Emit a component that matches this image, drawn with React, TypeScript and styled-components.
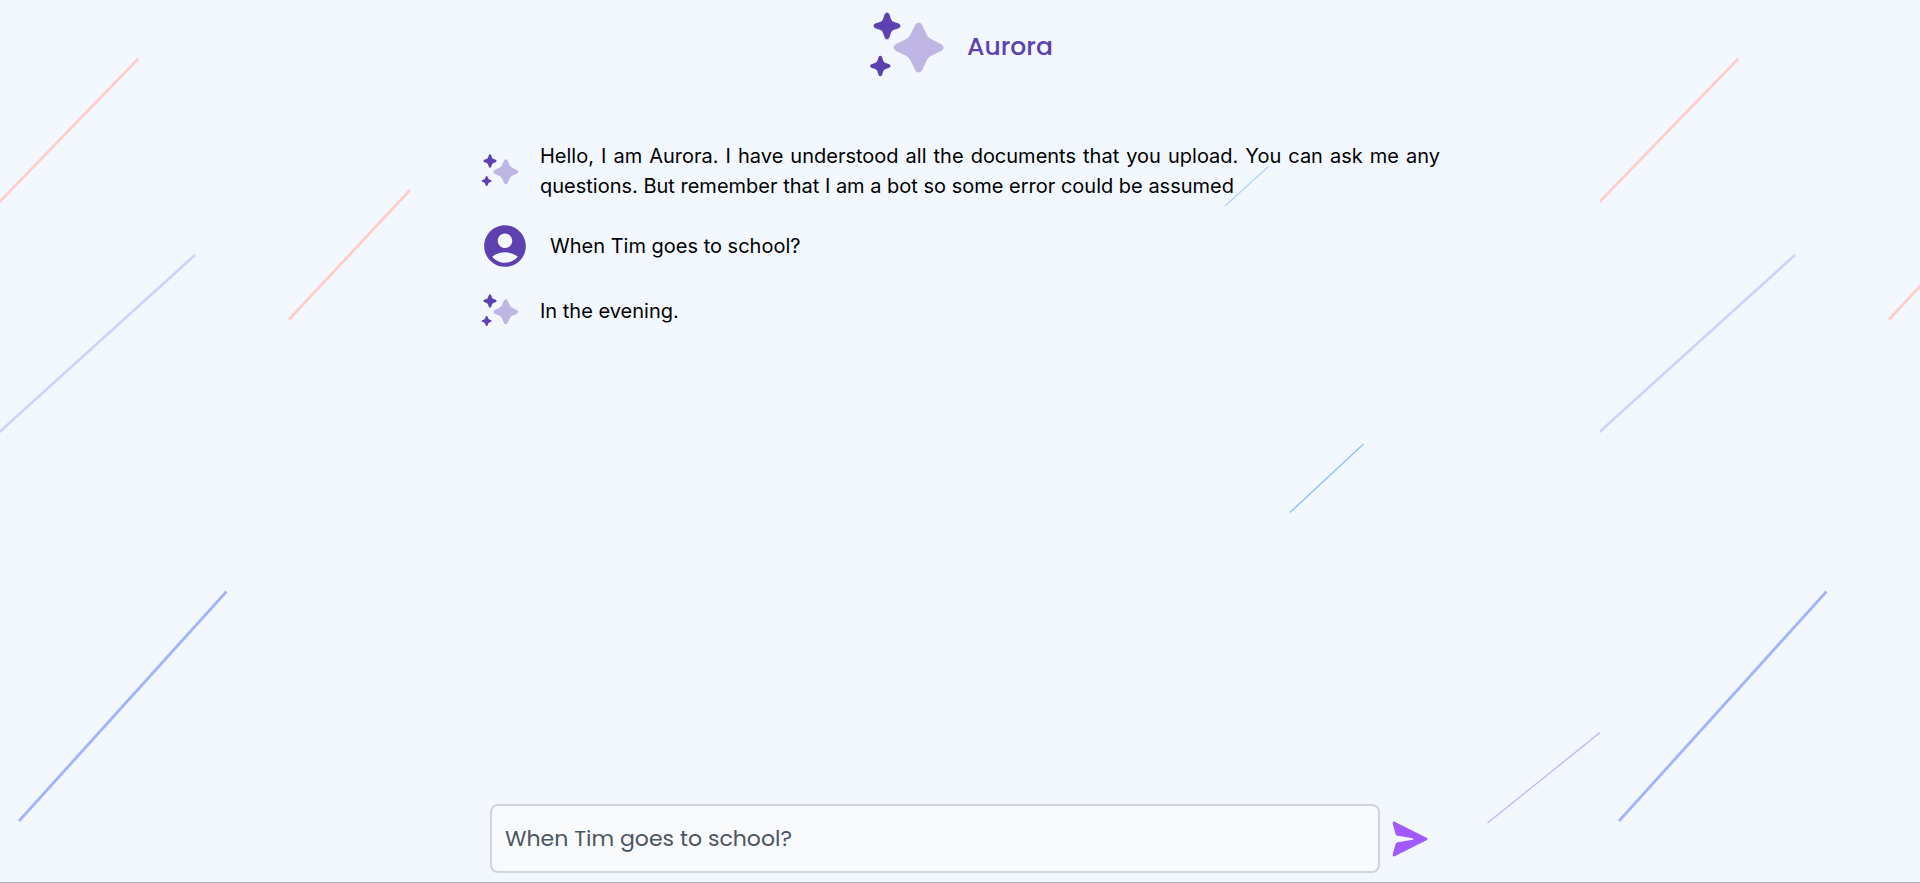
import React, { useState } from "react";
import styled, { createGlobalStyle } from "styled-components";
import { MdAccountCircle } from "react-icons/md";

const GlobalStyle = createGlobalStyle`
  *, *::before, *::after { box-sizing: border-box; }
  body { margin: 0; background: #f3f8ff; }
`;

const brandFont = `Poppins, Inter, sans-serif`;

const Page = styled.div`
  position: relative;
  min-height: 100vh;
  display: flex;
  flex-direction: column;
  align-items: center;
  background: #f3f8ff;
  border-bottom: 1px solid #aab2c0;
`;

const Backdrop = styled.svg`
  position: absolute;
  inset: 0;
  width: 100%;
  height: 100%;
  pointer-events: none;
`;

const Header = styled.header`
  position: relative;
  display: flex;
  align-items: center;
  gap: 20px;
  padding: 6px 0 55px;
`;

const Title = styled.h1`
  margin: 0;
  padding-top: 2px;
  font: 500 25px/36px ${brandFont};
  color: #5e41b0;
`;

const Messages = styled.main`
  position: relative;
  flex: 1;
  display: flex;
  flex-direction: column;
  gap: 20px;
  width: 100%;
  max-width: 960px;
`;

const Message = styled.article`
  display: flex;
  align-items: center;
  gap: 20px;
`;

const MessageText = styled.p`
  flex: 1;
  margin: 0;
  font: 400 20px/30px Inter, sans-serif;
  color: #000;
  text-align: justify;
`;

const Icon = styled.svg<{ $size: number }>`
  flex: none;
  display: block;
  width: ${(p) => p.$size}px;
  height: ${(p) => p.$size}px;
`;

const Composer = styled.form`
  position: relative;
  display: flex;
  align-items: center;
  gap: 10px;
  width: 100%;
  max-width: 960px;
  padding: 0 10px 9px;
`;

const Prompt = styled.input`
  flex: 1;
  min-width: 0;
  height: 69px;
  padding: 0 13px;
  border: 2px solid #d0d4db;
  border-radius: 8px;
  outline: none;
  background: #f9fafb;
  font: 400 22px/36px ${brandFont};
  color: #4b5563;
`;

const SendButton = styled.button`
  flex: none;
  padding: 0;
  border: 0;
  background: none;
  cursor: pointer;
`;

const STAR =
  "M-.13-.92Q0-1.08.13-.92L.34-.49Q.38-.4.49-.34L.92-.13Q1.08 0 .92.13L.49.34Q.38.4.34.49L.13.92Q0 1.08-.13.92L-.34.49Q-.38.4-.49.34L-.92.13Q-1.08 0-.92-.13L-.49-.34Q-.38-.4-.34-.49Z";
const SMALL_STAR =
  "M-.17-.88Q0-1.12.17-.88L.29-.52Q.36-.34.52-.29L.88-.17Q1.12 0 .88.17L.52.29Q.36.34.29.52L.17.88Q0 1.12-.17.88L-.29.52Q-.36.34-.52.29L-.88.17Q-1.12 0-.88-.17L-.52-.29Q-.36-.34-.29-.52Z";

function Sparkles({ size }: { size: number }) {
  return (
    <Icon $size={size} viewBox="0 0 80 80" aria-hidden="true">
      <path d={STAR} transform="translate(51.6 41.5) scale(25)" fill="#bfb6e3" />
      <path d={SMALL_STAR} transform="translate(20 19.9) scale(13.5)" fill="#5e41b0" />
      <path d={SMALL_STAR} transform="translate(13.3 60) scale(10.2)" fill="#5e41b0" />
    </Icon>
  );
}

function Streaks() {
  return (
    <Backdrop aria-hidden="true">
      <defs>
        <pattern id="streaks" width="1600" height="900" patternUnits="userSpaceOnUse">
          <g fill="none">
            <path d="M-4 205.5L138.5 58.5M289 319.5L410 190" stroke="#ffcdc8" strokeWidth="2.6" />
            <path d="M-4 435L195 255" stroke="#d1d0ff" strokeWidth="2.6" />
            <path d="M19 821L226.5 591.5" stroke="#a4b3ff" strokeWidth="2.8" />
            <path d="M1225 206L1268.5 166.5" stroke="#b5d3ff" strokeWidth="1.4" />
            <path d="M1290 512.5L1363.5 444" stroke="#93c1ff" strokeWidth="1.5" />
            <path d="M1487.5 823L1600 732.5" stroke="#c2b9ff" strokeWidth="1.5" />
          </g>
        </pattern>
      </defs>
      <rect width="100%" height="100%" fill="url(#streaks)" />
    </Backdrop>
  );
}

type Entry = { from: "bot" | "user"; text: string };

const entries: Entry[] = [
  {
    from: "bot",
    text: "Hello, I am Aurora. I have understood all the documents that you upload. You can ask me any questions. But remember that I am a bot so some error could be assumed",
  },
  { from: "user", text: "When Tim goes to school?" },
  { from: "bot", text: "In the evening." },
];

export default function App() {
  const [prompt, setPrompt] = useState("When Tim goes to school?");
  return (
    <Page>
      <GlobalStyle />
      <Streaks />
      <Header>
        <Sparkles size={80} />
        <Title>Aurora</Title>
      </Header>
      <Messages>
        {entries.map((entry) => (
          <Message key={entry.text}>
            {entry.from === "bot" ? (
              <Sparkles size={40} />
            ) : (
              <Icon as={MdAccountCircle} $size={50} color="#5e41b0" />
            )}
            <MessageText>{entry.text}</MessageText>
          </Message>
        ))}
      </Messages>
      <Composer onSubmit={(e) => e.preventDefault()}>
        <Prompt
          aria-label="Ask a question"
          value={prompt}
          onChange={(e) => setPrompt(e.target.value)}
        />
        <SendButton type="submit" aria-label="Send">
          <Icon $size={40} viewBox="0 0 40 40">
            <path
              d="M5.2 2.9L36.5 18.8Q38.8 20 36.5 21.2L5.2 37.1Q2.2 38.2 2.7 35.2L5.5 25.3Q5.9 23.5 7.7 23.2L22.5 20.8Q24.5 20 22.5 19.2L7.7 16.8Q5.9 16.5 5.5 14.7L2.7 4.8Q2.2 1.8 5.2 2.9Z"
              fill="#a259ff"
            />
          </Icon>
        </SendButton>
      </Composer>
    </Page>
  );
}
